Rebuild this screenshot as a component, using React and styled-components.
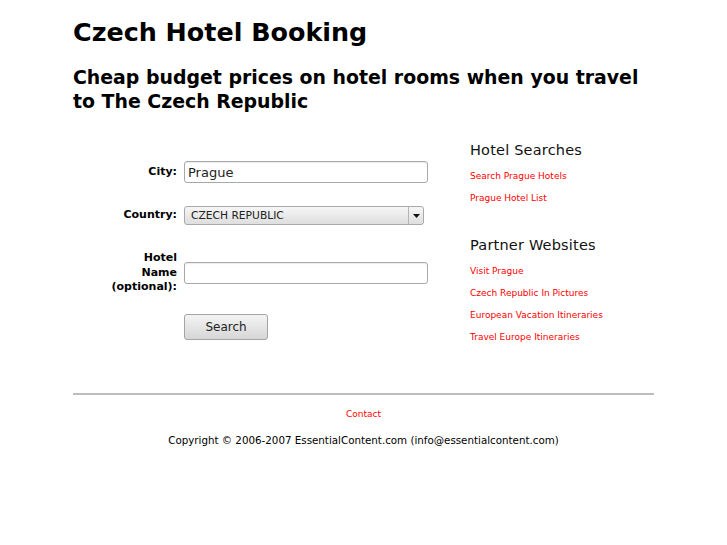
import React from 'react';
import styled, { createGlobalStyle } from 'styled-components';

const GlobalStyle = createGlobalStyle`
  body {
    margin: 0;
    background: #fff;
    font-family: "DejaVu Sans", Verdana, sans-serif;
    color: #000;
  }
`;

const Page = styled.div`
  width: 581px;
  margin: 0 auto;
`;

const Title = styled.h1`
  font-size: 25.4px;
  font-weight: 700;
  line-height: 30px;
  margin: 17px 0 0;
`;

const Subtitle = styled.h2`
  font-size: 18.9px;
  font-weight: 700;
  line-height: 24px;
  margin: 18px 0 0;
`;

const Main = styled.div`
  display: flex;
  margin-top: 25px;
`;

const FormArea = styled.div`
  width: 397px;
  display: flex;
  flex-direction: column;
`;

const FormRow = styled.div`
  display: grid;
  grid-template-columns: 104px 1fr;
  column-gap: 7px;
  align-items: center;
  margin-top: ${props => props.gap}px;
`;

const Label = styled.label`
  text-align: right;
  font-size: 11px;
  font-weight: 700;
  line-height: 14.5px;
`;

const TextInput = styled.input`
  box-sizing: border-box;
  width: 244px;
  height: 22px;
  margin: 0;
  padding: 0 3px;
  border: 1px solid #a8a8a8;
  border-radius: 3px;
  box-shadow: inset 0 1px 1px rgba(0, 0, 0, 0.08);
  font-family: "DejaVu Sans", sans-serif;
  font-size: 13px;
  color: #222;
  outline: none;
`;

const SelectBox = styled.div`
  box-sizing: border-box;
  width: 240px;
  height: 19px;
  display: flex;
  border: 1px solid #aaa;
  border-radius: 3px;
  background: linear-gradient(#f6f6f6, #dedede);
  font-size: 10.7px;
  color: #222;
`;

const SelectText = styled.span`
  flex: 1;
  padding-left: 6px;
  line-height: 17px;
`;

const SelectArrow = styled.span`
  width: 14px;
  border-left: 1px solid #b4b4b4;
  display: flex;
  align-items: center;
  justify-content: center;
`;

const Button = styled.button`
  box-sizing: border-box;
  width: 84px;
  height: 26px;
  border: 1px solid #a4a4a4;
  border-radius: 3px;
  background: linear-gradient(#f4f4f4, #d6d6d6);
  font-family: "DejaVu Sans", sans-serif;
  font-size: 12px;
  color: #222;
  padding: 0;
`;

const Sidebar = styled.div`
  flex: 1;
  padding-top: 3px;
`;

const SideHeading = styled.h3`
  font-size: 14.5px;
  font-weight: 400;
  color: #111;
  margin: ${props => (props.first ? '0' : '27px')} 0 6px;
  line-height: 18px;
  letter-spacing: 0.2px;
`;

const SideLink = styled.a`
  display: block;
  color: #f00;
  font-size: 9px;
  line-height: 22px;
  text-decoration: none;
`;

const Rule = styled.hr`
  margin: 45px 0 0;
  border: 0;
  border-top: 2px solid #bdbdbd;
  height: 0;
`;

const Footer = styled.div`
  text-align: center;
  padding-top: 7px;
`;

const FooterLink = styled.a`
  color: #f00;
  font-size: 9px;
  text-decoration: none;
`;

const Copyright = styled.p`
  font-size: 10.3px;
  margin: 13px 0 0;
`;

export default function App() {
  return (
    <>
      <GlobalStyle />
      <Page>
        <Title>Czech Hotel Booking</Title>
        <Subtitle>Cheap budget prices on hotel rooms when you travel to The Czech Republic</Subtitle>
        <Main>
          <FormArea>
            <FormRow gap={23}>
              <Label>City:</Label>
              <TextInput defaultValue="Prague" />
            </FormRow>
            <FormRow gap={23}>
              <Label>Country:</Label>
              <SelectBox>
                <SelectText>CZECH REPUBLIC</SelectText>
                <SelectArrow>
                  <svg width="7" height="4" viewBox="0 0 7 4">
                    <path d="M0 0h7L3.5 4z" fill="#111" />
                  </svg>
                </SelectArrow>
              </SelectBox>
            </FormRow>
            <FormRow gap={26}>
              <Label>
                Hotel
                <br />
                Name
                <br />
                (optional):
              </Label>
              <TextInput />
            </FormRow>
            <FormRow gap={19}>
              <span />
              <Button>Search</Button>
            </FormRow>
          </FormArea>
          <Sidebar>
            <SideHeading first>Hotel Searches</SideHeading>
            <SideLink href="#">Search Prague Hotels</SideLink>
            <SideLink href="#">Prague Hotel List</SideLink>
            <SideHeading>Partner Websites</SideHeading>
            <SideLink href="#">Visit Prague</SideLink>
            <SideLink href="#">Czech Republic In Pictures</SideLink>
            <SideLink href="#">European Vacation Itineraries</SideLink>
            <SideLink href="#">Travel Europe Itineraries</SideLink>
          </Sidebar>
        </Main>
        <Rule />
        <Footer>
          <FooterLink href="#">Contact</FooterLink>
          <Copyright>Copyright © 2006-2007 EssentialContent.com (info@essentialcontent.com)</Copyright>
        </Footer>
      </Page>
    </>
  );
}
